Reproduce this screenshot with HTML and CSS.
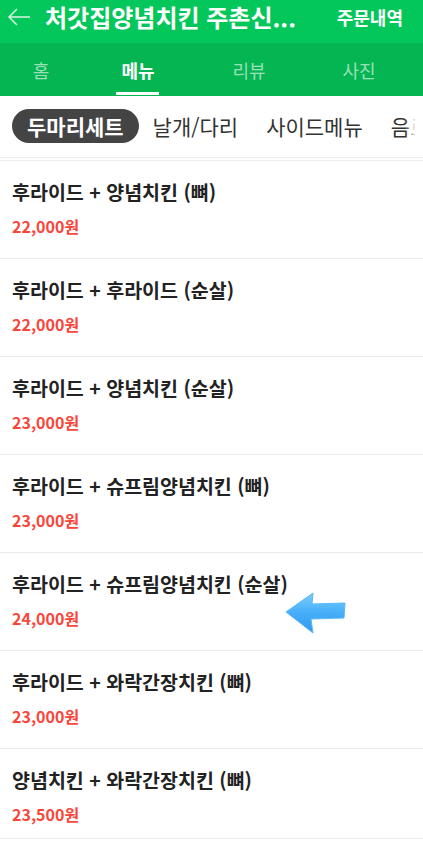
FILE: index.html
```html
<!DOCTYPE html>
<html lang="ko">
<head>
  <meta charset="UTF-8" />
  <meta name="viewport" content="width=device-width, initial-scale=1.0"/>
  <title>처갓집양념치킨 메뉴</title>
  <link rel="stylesheet" href="styles.css">
</head>
<body>
  <!-- Top bar -->
  <div class="topbar">
    <svg class="back" width="24" height="20" viewBox="0 0 24 20">
      <path d="M23 10H2M10 2L2 10l8 8" fill="none" stroke="#d8f5e4" stroke-width="1.5"/>
    </svg>
    <div class="title">처갓집양념치킨 주촌신...</div>
    <div class="orders">주문내역</div>
  </div>

  <!-- Tabs -->
  <div class="tabs">
    <div class="tab">홈</div>
    <div class="tab active">메뉴</div>
    <div class="tab">리뷰</div>
    <div class="tab">사진</div>
  </div>

  <!-- Categories -->
  <div class="categories">
    <div class="cat selected">두마리세트</div>
    <div class="cat">날개/다리</div>
    <div class="cat">사이드메뉴</div>
    <div class="cat">음료</div>
  </div>

  <div class="menu-list">
    <div class="menu-item">
      <div class="name">후라이드 + 양념치킨 (뼈)</div>
      <div class="price">22,000원</div>
    </div>
    <div class="menu-item">
      <div class="name">후라이드 + 후라이드 (순살)</div>
      <div class="price">22,000원</div>
    </div>
    <div class="menu-item">
      <div class="name">후라이드 + 양념치킨 (순살)</div>
      <div class="price">23,000원</div>
    </div>
    <div class="menu-item">
      <div class="name">후라이드 + 슈프림양념치킨 (뼈)</div>
      <div class="price">23,000원</div>
    </div>
    <div class="menu-item pointed">
      <div class="name">후라이드 + 슈프림양념치킨 (순살)</div>
      <div class="price">24,000원</div>
      <!-- pointer arrow -->
      <svg class="pointer" width="64" height="44" viewBox="0 0 64 44">
        <defs>
          <linearGradient id="blue" x1="0" y1="0" x2="0" y2="1">
            <stop offset="0" stop-color="#7acdff"/>
            <stop offset="0.5" stop-color="#46aef9"/>
            <stop offset="1" stop-color="#3398ea"/>
          </linearGradient>
        </defs>
        <path d="M2 20L29 1l-1 11 33-1-1 15-33 1 2 14z" fill="url(#blue)" stroke="#58b8fb" stroke-width="1" stroke-linejoin="round"/>
      </svg>
    </div>
    <div class="menu-item">
      <div class="name">후라이드 + 와락간장치킨 (뼈)</div>
      <div class="price">23,000원</div>
    </div>
    <div class="menu-item last">
      <div class="name">양념치킨 + 와락간장치킨 (뼈)</div>
      <div class="price">23,500원</div>
    </div>
  </div>
</body>
</html>
```

FILE: styles.css
```css
* {
  margin: 0;
  padding: 0;
  box-sizing: border-box;
}

body {
  background: #fff;
  font-family: "Noto Sans CJK KR", "Noto Sans", sans-serif;
  color: #222;
  width: 423px;
  overflow: hidden;
}

.topbar {
  height: 43px;
  background: #03c75a;
  display: flex;
  align-items: center;
  padding: 0 20px 10px 7px;
  color: white;
}

.back {
  flex-shrink: 0;
}

.title {
  flex: 1;
  margin-left: 14px;
  font-size: 24px;
  font-weight: bold;
  line-height: 32px;
  white-space: nowrap;
}

.orders {
  font-size: 18px;
  font-weight: bold;
  line-height: 24px;
}

.tabs {
  height: 53px;
  background: #04b552;
  display: grid;
  grid-template-columns: 82px 112px 110px 110px;
}

.tab {
  display: flex;
  justify-content: center;
  align-items: center;
  font-size: 18px;
  color: rgba(255, 255, 255, 0.6);
  padding-top: 1px;
}

.tab.active {
  color: white;
  font-weight: bold;
  position: relative;
}

.tab.active::after {
  content: "";
  position: absolute;
  bottom: 1px;
  left: 34px;
  width: 43px;
  height: 3px;
  background: white;
}

.categories {
  height: 62px;
  display: flex;
  align-items: center;
  padding: 0 0 2px 12px;
  border-bottom: 1px solid #eee;
  white-space: nowrap;
  overflow: hidden;
  position: relative;
}

.categories::after {
  content: "";
  position: absolute;
  top: 0;
  right: 0;
  width: 18px;
  height: 100%;
  background: linear-gradient(to right, rgba(255, 255, 255, 0), #fff 60%);
}

.cat {
  flex-shrink: 0;
  font-size: 21px;
  line-height: 34px;
  padding: 0 14px;
  color: #333;
}

.cat.selected {
  background: #444;
  color: white;
  font-weight: bold;
  border-radius: 17px;
  padding: 0 15px;
}

.menu-list {
  margin-top: 2px;
  border-top: 1px solid #eee;
}

.menu-item {
  padding: 19px 12px 21px;
  border-bottom: 1px solid #eaeaea;
}

.menu-item.last {
  padding-bottom: 13px;
}

.name {
  font-size: 19.5px;
  font-weight: bold;
  line-height: 24px;
  color: #222;
}

.price {
  margin-top: 11px;
  font-size: 16px;
  font-weight: bold;
  line-height: 22px;
  color: #fa463a;
}

.pointed {
  position: relative;
}

.pointer {
  position: absolute;
  left: 284px;
  top: 39px;
}
```
